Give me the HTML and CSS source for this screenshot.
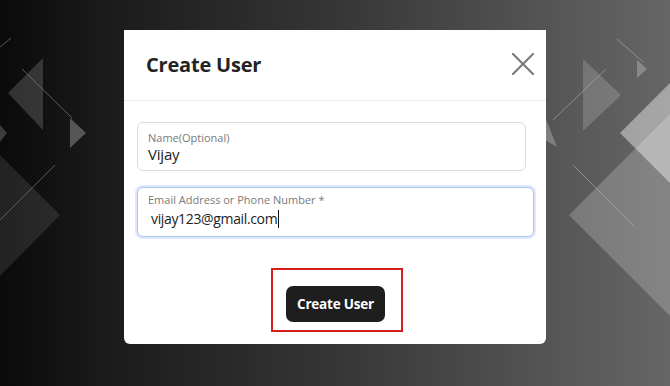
FILE: index.html
```html
<!DOCTYPE html>
<html lang="en">
<head>
<meta charset="utf-8">
<title>Create User</title>
<link rel="stylesheet" href="styles.css">
</head>
<body>
<svg class="backdrop" width="670" height="386" viewBox="0 0 670 386" aria-hidden="true">
  <!-- left side -->
  <polygon points="8,93 43,58 43,130" fill="#ffffff" fill-opacity="0.16"/>
  <polygon points="70,118 86,133 70,148" fill="#ffffff" fill-opacity="0.28"/>
  <polygon points="0,125 7,133 0,142" fill="#ffffff" fill-opacity="0.2"/>
  <polygon points="0,155 60,215 0,276" fill="#ffffff" fill-opacity="0.1"/>
  <line x1="22" y1="69" x2="72" y2="118" stroke="#8a8a8a" stroke-width="0.6"/>
  <line x1="0" y1="47" x2="11" y2="38" stroke="#8a8a8a" stroke-width="0.6"/>
  <line x1="55" y1="165" x2="0" y2="220" stroke="#8a8a8a" stroke-width="0.6"/>
  <!-- right side -->
  <polygon points="569,215 720,64 871,215 720,366" fill="#ffffff" fill-opacity="0.2"/>
  <polygon points="620,133 720,33 820,133 720,233" fill="#ffffff" fill-opacity="0.42"/>
  <polygon points="583,59 621,95 583,131" fill="#ffffff" fill-opacity="0.17"/>
  <polygon points="637,60 647,69 637,78" fill="#ffffff" fill-opacity="0.25"/>
  <polygon points="545,117 557,147 545,140" fill="#ffffff" fill-opacity="0.25"/>
  <line x1="617" y1="39" x2="643" y2="62" stroke="#b0b0b0" stroke-width="0.6"/>
  <line x1="606" y1="69" x2="553" y2="120" stroke="#b0b0b0" stroke-width="0.6"/>
  <line x1="573" y1="165" x2="635" y2="227" stroke="#b0b0b0" stroke-width="0.6"/>
</svg>

<div class="stage">
  <div class="modal">
    <div class="modal-header">
      <h2 class="modal-title">Create User</h2>
      <button class="close-btn" type="button" aria-label="Close">
        <svg width="22" height="22" viewBox="0 0 22 22">
          <path d="M1 1 L21 21 M21 1 L1 21" stroke="#777" stroke-width="2" fill="none" stroke-linecap="square"/>
        </svg>
      </button>
    </div>
    <div class="modal-body">
      <div class="field field-name">
        <div class="field-label">Name(Optional)</div>
        <div class="field-value">Vijay</div>
      </div>
      <div class="field field-email">
        <div class="field-label">Email Address or Phone Number *</div>
        <div class="field-value email-value">vijay123@gmail.com<span class="caret"></span></div>
      </div>
      <div class="actions">
        <div class="highlight">
          <button class="primary-btn" type="button">Create User</button>
        </div>
      </div>
    </div>
  </div>
</div>
</body>
</html>
```

FILE: styles.css
```css
* { box-sizing: border-box; }

html, body {
  margin: 0;
  padding: 0;
}

body {
  width: 670px;
  height: 386px;
  overflow: hidden;
  position: relative;
  font-family: "Open Sans", "Noto Sans", sans-serif;
  background: linear-gradient(to right, #0a0a0a 0%, #1a1a1a 15%, #363636 50%, #585858 85%, #666666 100%);
}

.backdrop {
  position: absolute;
  left: 0;
  top: 0;
  z-index: 0;
}

.stage {
  position: relative;
  z-index: 1;
  padding: 30px 0 0 124px;
}

.modal {
  width: 422px;
  background: #ffffff;
  border-radius: 0 0 6px 6px;
}

.modal-header {
  height: 71px;
  display: flex;
  align-items: center;
  justify-content: space-between;
  padding: 0 12px 2px 22px;
  border-bottom: 1px solid #ececec;
}

.modal-title {
  margin: 0;
  font-size: 20px;
  font-weight: 700;
  color: #232323;
  letter-spacing: -0.2px;
}

.close-btn {
  border: 0;
  background: transparent;
  padding: 0;
  width: 22px;
  height: 22px;
  display: flex;
}

.modal-body {
  padding: 21px 12px 12px 13px;
}

.field {
  border: 1px solid #dcdcdc;
  border-radius: 6px;
  padding: 8px 10px 0 10px;
  background: #fff;
}

.field-name {
  width: 389px;
  height: 49px;
}

.field-email {
  margin-top: 16px;
  width: 397px;
  height: 50px;
  padding-top: 5px;
  border-color: #a9c6ec;
  box-shadow: 0 0 0 2px rgba(120, 165, 230, 0.25);
}

.field-label {
  font-size: 11px;
  line-height: 14px;
  color: #7a7a7a;
}

.field-value {
  font-size: 15px;
  line-height: 19px;
  color: #222;
  letter-spacing: -0.2px;
}

.email-value {
  margin-top: 2px;
  padding-left: 3px;
  font-size: 14px;
  letter-spacing: -0.35px;
}

.caret {
  display: inline-block;
  width: 1px;
  height: 18px;
  margin-left: 1px;
  background: #111;
  vertical-align: -4px;
}

.actions {
  margin-top: 31px;
  display: flex;
  justify-content: center;
  padding-left: 3px;
}

.highlight {
  width: 132px;
  height: 64px;
  border: 2px solid #d81d1d;
  padding: 16px 0 0 13px;
}

.primary-btn {
  width: 99px;
  height: 36px;
  border: 0;
  border-radius: 7px;
  background: #1e1e1e;
  color: #fff;
  font-family: "Open Sans", "Noto Sans", sans-serif;
  font-size: 13.5px;
  font-weight: 700;
  letter-spacing: -0.2px;
  padding: 0;
}
```
